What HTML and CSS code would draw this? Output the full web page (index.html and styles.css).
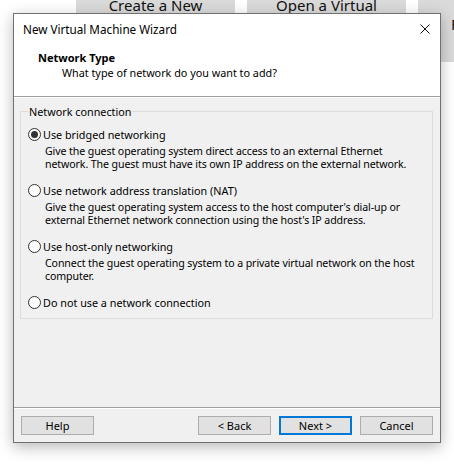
FILE: index.html
```html
<!DOCTYPE html>
<html lang="en">
  <head>
    <meta charset="UTF-8" />
    <meta name="viewport" content="width=device-width, initial-scale=1.0" />
    <title>New Virtual Machine Wizard</title>
    <link rel="stylesheet" href="styles.css">
  </head>
  <body>
    <div class="home-tiles">
      <div class="tile"><span class="tile-text">Create a New</span></div>
      <div class="tile"><span class="tile-text">Open a Virtual</span></div>
      <div class="tile tile-edge"><span class="tile-text">F</span></div>
    </div>

    <div class="wizard">
      <div class="titlebar">
        <span class="title">New Virtual Machine Wizard</span>
        <span class="close">
          <svg width="10" height="10" viewBox="0 0 10 10"><path d="M0.5 0.5L9.5 9.5M9.5 0.5L0.5 9.5" stroke="#111" stroke-width="1"/></svg>
        </span>
      </div>
      <div class="wizard-header">
        <h2>Network Type</h2>
        <p>What type of network do you want to add?</p>
      </div>
      <div class="wizard-body">
        <fieldset class="group">
          <legend>Network connection</legend>
          <label class="option">
            <span class="radio checked"></span>
            <span class="option-text">
              <span class="option-label">Use bridged networking</span>
              <span class="option-desc">Give the guest operating system direct access to an external Ethernet<br>network. The guest must have its own IP address on the external network.</span>
            </span>
          </label>
          <label class="option">
            <span class="radio"></span>
            <span class="option-text">
              <span class="option-label">Use network address translation (NAT)</span>
              <span class="option-desc">Give the guest operating system access to the host computer's dial-up or<br>external Ethernet network connection using the host's IP address.</span>
            </span>
          </label>
          <label class="option">
            <span class="radio"></span>
            <span class="option-text">
              <span class="option-label">Use host-only networking</span>
              <span class="option-desc">Connect the guest operating system to a private virtual network on the host<br>computer.</span>
            </span>
          </label>
          <label class="option">
            <span class="radio"></span>
            <span class="option-text">
              <span class="option-label">Do not use a network connection</span>
            </span>
          </label>
        </fieldset>
      </div>
      <div class="wizard-footer">
        <button class="btn">Help</button>
        <span class="spacer"></span>
        <button class="btn">&lt; Back</button>
        <button class="btn btn-default">Next &gt;</button>
        <button class="btn">Cancel</button>
      </div>
    </div>
  </body>
</html>
```
FILE: styles.css
```css
:root {
  --dialog-bg: #f0f0f0;
  --text: #000;
  --frame: #707070;
  --etch-dark: #a0a0a0;
  --group-line: #dcdcdc;
  --button-bg: #e1e1e1;
  --button-border: #adadad;
  --accent: #0078d7;
}
* { box-sizing: border-box; margin: 0; padding: 0; }
html, body { width: 454px; height: 468px; overflow: hidden; background: #fff; font-family: "Noto Sans", "Open Sans", sans-serif; color: var(--text); }
body { position: relative; }

/* launcher tiles behind the dialog */
.home-tiles { display: flex; gap: 12px; padding-left: 76px; height: 62px; }
.tile { width: 159px; flex: none; background: #dadada; text-align: center; overflow: hidden; }
.tile-text { display: block; margin-top: -5px; font-size: 15px; line-height: 20px; color: #111; white-space: nowrap; }
.tile-edge { text-align: left; padding-left: 33px; }
.tile-edge .tile-text { margin-top: 14px; }

/* wizard window */
.wizard { position: absolute; left: 13px; top: 13px; width: 428px; height: 430px; border: 1px solid var(--frame); background: var(--dialog-bg); box-shadow: 0 4px 14px rgba(0, 0, 0, 0.28); display: flex; flex-direction: column; }
.titlebar { height: 30px; background: #fff; display: flex; align-items: center; justify-content: space-between; padding: 0 10px 0 9px; }
.title { font-size: 11.7px; }
.close { display: flex; width: 10px; height: 10px; }

.wizard-header { background: #fff; height: 53px; padding: 6px 0 0 24px; border-bottom: 1px solid var(--etch-dark); }
.wizard-header h2 { font-size: 11px; font-weight: 700; line-height: 15px; }
.wizard-header p { font-size: 10.8px; line-height: 15px; padding-left: 24px; }

.wizard-body { flex: 1; padding: 7px 7px 0 6px; border-top: 1px solid #fff; }
.group { border: 1px solid var(--group-line); height: 214px; padding: 0 0 0 7px; }
.group legend { font-size: 10.8px; line-height: 13px; padding: 0 1px; }
.option { display: flex; align-items: flex-start; margin-top: 9px; white-space: nowrap; }
.option + .option { margin-top: 12px; }
.radio { flex: none; width: 13px; height: 13px; border: 1px solid #333; border-radius: 50%; background: #fff; margin-top: 1px; position: relative; }
.radio.checked::after { content: ""; position: absolute; left: 2px; top: 2px; width: 7px; height: 7px; border-radius: 50%; background: #333; }
.option-text { display: flex; flex-direction: column; padding-left: 2px; }
.option-label { font-size: 10.8px; line-height: 15px; }
.option-desc { font-size: 10.6px; line-height: 13px; padding-left: 2px; margin-top: 3px; letter-spacing: -0.1px; }

.wizard-footer { height: 35px; border-top: 1px solid var(--etch-dark); display: flex; align-items: flex-start; padding: 8px 7px 0 7px; gap: 8px; box-shadow: inset 0 1px 0 #fff; }
.spacer { flex: 1; }
.btn { width: 73px; height: 19px; background: var(--button-bg); border: 1px solid var(--button-border); font-family: inherit; font-size: 11px; color: #000; }
.btn-default { border: 2px solid var(--accent); }
```
